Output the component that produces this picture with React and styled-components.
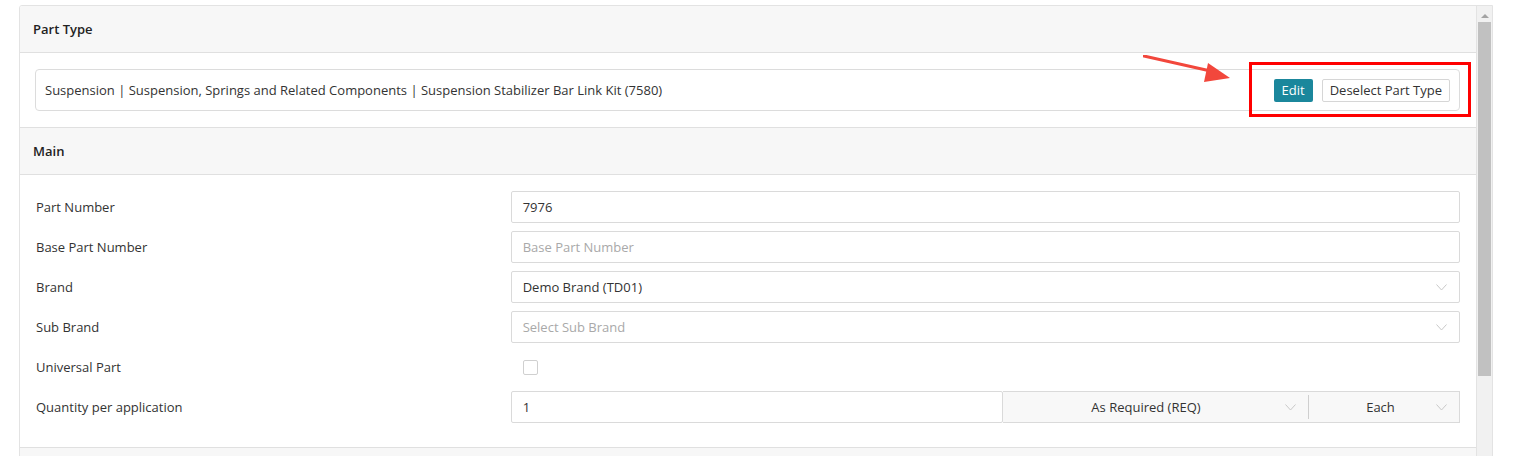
import styled, { createGlobalStyle } from 'styled-components';

const GlobalStyle = createGlobalStyle`
    html, body {
        margin: 0;
        padding: 0;
        background: #ffffff;
        overflow: hidden;
    }
    body {
        font-family: "Open Sans", "Noto Sans", Arial, sans-serif;
        font-size: 13px;
        color: #333333;
    }
`

// 폼 데이터
const fields = [
    { label: "Part Number", type: "input", value: "7976" },
    { label: "Base Part Number", type: "input", placeholder: "Base Part Number" },
    { label: "Brand", type: "select", value: "Demo Brand (TD01)" },
    { label: "Sub Brand", type: "select", placeholder: "Select Sub Brand" },
    { label: "Universal Part", type: "checkbox" },
    { label: "Quantity per application", type: "quantity", value: "1" },
];

const Chevron = () => (
    <svg width="11" height="7" viewBox="0 0 11 7" fill="none">
        <path d="M0.5 0.5 L5.5 6 L10.5 0.5" stroke="#c8c8c8" strokeWidth="1" />
    </svg>
);

const Arrow = () => (
    <ArrowSvg width="100" height="40" viewBox="0 0 100 40">
        <line x1="1" y1="1" x2="72" y2="17" stroke="#f2473c" strokeWidth="3" strokeLinecap="round" />
        <polygon points="87,23 65,8 61,27" fill="#f2473c" />
    </ArrowSvg>
);

const FieldControl = ({ f }) => {
    if (f.type === "input") {
        return (
            <TextBox $placeholder={!f.value}>{f.value || f.placeholder}</TextBox>
        );
    }
    if (f.type === "select") {
        return (
            <SelectBox $placeholder={!f.value}>
                <span>{f.value || f.placeholder}</span>
                <Chevron />
            </SelectBox>
        );
    }
    if (f.type === "checkbox") {
        return (
            <CheckCell>
                <CheckBox />
            </CheckCell>
        );
    }
    // 수량 입력 + 선택 2개
    return (
        <QtyRow>
            <TextBox>{f.value}</TextBox>
            <QtySelects>
                <QtySelect $width="305px" $padLeft="4px">
                    <span>As Required (REQ)</span>
                    <Chevron />
                </QtySelect>
                <QtyDivider />
                <QtySelect $width="150px" $padLeft="16px">
                    <span>Each</span>
                    <Chevron />
                </QtySelect>
            </QtySelects>
        </QtyRow>
    );
};

const App = () => {
    return (
        <>
            <GlobalStyle />
            <Page>
                <Frame>
                    <Content>
                        <SectionHeader>Part Type</SectionHeader>
                        <PartTypeBody>
                            <PartTypeBox>
                                <span>Suspension | Suspension, Springs and Related Components | Suspension Stabilizer Bar Link Kit (7580)</span>
                                <ButtonGroup>
                                    <Arrow />
                                    <EditButton>Edit</EditButton>
                                    <PlainButton>Deselect Part Type</PlainButton>
                                </ButtonGroup>
                            </PartTypeBox>
                        </PartTypeBody>

                        <SectionHeader>Main</SectionHeader>
                        <FormBody>
                            {fields.map((f) => (
                                <FormRow key={f.label}>
                                    <Label>{f.label}</Label>
                                    <FieldControl f={f} />
                                </FormRow>
                            ))}
                        </FormBody>

                        <SectionHeader />
                    </Content>
                    <Scrollbar>
                        <ScrollArrow />
                        <ScrollThumb />
                    </Scrollbar>
                </Frame>
            </Page>
        </>
    )
}
export default App;

const Page = styled.div`
    padding: 5px 20px 0 19px;
`
const Frame = styled.div`
    display: flex;
    height: 470px;
    border: 1px solid #e3e3e3;
    border-radius: 3px 0 0 0;
    overflow: hidden;
`
const Content = styled.div`
    flex: 1;
    min-width: 0;
    border-right: 1px solid #e3e3e3;
`
const Scrollbar = styled.div`
    width: 15px;
    background: #f1f1f1;
    display: flex;
    flex-direction: column;
    align-items: center;
`
const ScrollArrow = styled.div`
    margin-top: 8px;
    width: 0;
    height: 0;
    border-left: 4px solid transparent;
    border-right: 4px solid transparent;
    border-bottom: 4px solid #a3a3a3;
`
const ScrollThumb = styled.div`
    margin-top: 4px;
    width: 13px;
    height: 354px;
    background: #c1c1c1;
`
const SectionHeader = styled.div`
    height: 46px;
    padding: 0 13px;
    display: flex;
    align-items: center;
    background: #f7f7f7;
    border-bottom: 1px solid #e0e0e0;
    font-weight: 600;
    color: #222;
`
const PartTypeBody = styled.div`
    padding: 16px 16px 16px 15px;
    border-bottom: 1px solid #e0e0e0;
`
const PartTypeBox = styled.div`
    height: 40px;
    display: flex;
    align-items: center;
    justify-content: space-between;
    padding: 0 9px 0 9px;
    border: 1px solid #dcdcdc;
    border-radius: 4px;
`
const ButtonGroup = styled.div`
    position: relative;
    display: flex;
    gap: 9px;

    &::after {
        content: "";
        position: absolute;
        left: -25px;
        right: -21px;
        top: -17px;
        bottom: -15px;
        border: 3px solid #ff0000;
        pointer-events: none;
    }
`
const ArrowSvg = styled.svg`
    position: absolute;
    left: -131px;
    top: -24px;
`
const EditButton = styled.button`
    height: 23px;
    padding: 0 8px;
    border: none;
    border-radius: 2px;
    background: #1b879c;
    color: #ffffff;
    font: inherit;
`
const PlainButton = styled.button`
    height: 23px;
    padding: 0 7px;
    border: 1px solid #d6d6d6;
    border-radius: 2px;
    background: #ffffff;
    color: #333;
    font: inherit;
`
const FormBody = styled.div`
    padding: 16px 16px 16px 16px;
    border-bottom: 1px solid #e0e0e0;
`
const FormRow = styled.div`
    display: grid;
    grid-template-columns: 1fr 2fr;
    align-items: center;
    margin-bottom: 8px;
`
const Label = styled.div`
    color: #333;
`
const TextBox = styled.div`
    height: 32px;
    box-sizing: border-box;
    padding: 0 11px;
    display: flex;
    align-items: center;
    border: 1px solid #dadada;
    border-radius: 2px;
    color: ${(p) => (p.$placeholder ? "#a9a9a9" : "#333")};
    flex: 1;
`
const SelectBox = styled(TextBox)`
    justify-content: space-between;
    padding-right: 12px;
`
const CheckCell = styled.div`
    height: 32px;
    display: flex;
    align-items: center;
    padding-left: 12px;
`
const CheckBox = styled.div`
    width: 15px;
    height: 15px;
    box-sizing: border-box;
    border: 1px solid #d0d0d0;
    border-radius: 2px;
`
const QtyRow = styled.div`
    display: flex;
`
const QtySelects = styled.div`
    display: flex;
    align-items: center;
    height: 32px;
    box-sizing: border-box;
    border: 1px solid #dadada;
    border-left: none;
    background: #f8f8f8;
`
const QtySelect = styled.div`
    width: ${(p) => p.$width};
    height: 100%;
    display: flex;
    align-items: center;
    justify-content: space-between;
    padding: 0 12px 0 ${(p) => p.$padLeft};
    box-sizing: border-box;

    span {
        flex: 1;
        text-align: center;
    }
`
const QtyDivider = styled.div`
    width: 1px;
    height: 24px;
    background: #cfcfcf;
`
